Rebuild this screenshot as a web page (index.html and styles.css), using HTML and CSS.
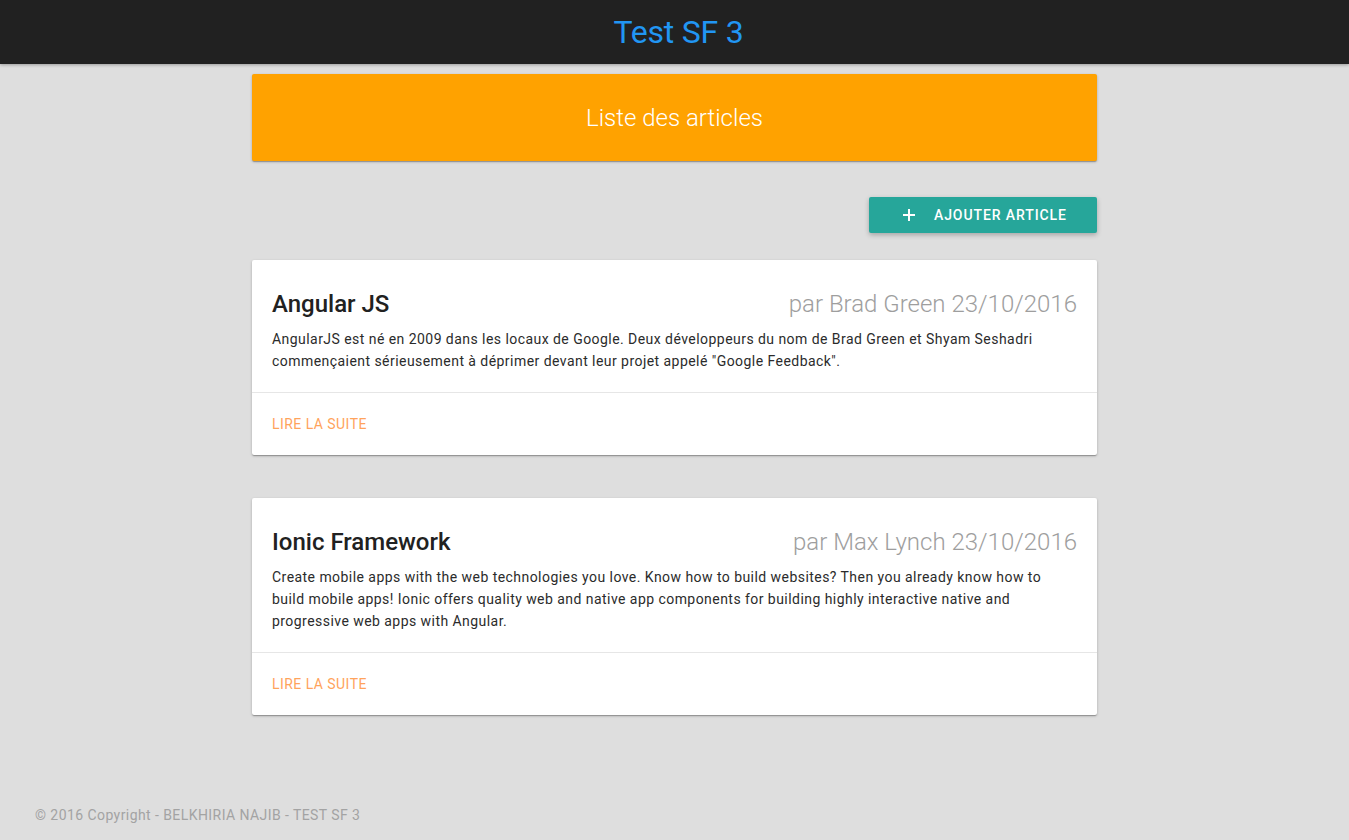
FILE: index.html
```html
<!DOCTYPE html>
<html lang="fr">
<head>
<meta charset="utf-8">
<title>Test SF 3</title>
<link rel="stylesheet" href="styles.css">
</head>
<body>
<header class="topbar">
  <h1 class="topbar-title">Test SF 3</h1>
</header>
<main class="content">
  <div class="banner">Liste des articles</div>
  <div class="actions-row">
    <button class="btn-add" type="button">
      <svg class="btn-icon" width="14" height="14" viewBox="0 0 14 14" aria-hidden="true"><path d="M7 1v12M1 7h12" stroke="#fff" stroke-width="2" fill="none"/></svg>
      <span>Ajouter article</span>
    </button>
  </div>
  <article class="card">
    <div class="card-body">
      <div class="card-head">
        <h2 class="card-title">Angular JS</h2>
        <span class="card-meta">par Brad Green 23/10/2016</span>
      </div>
      <p class="card-text">AngularJS est né en 2009 dans les locaux de Google. Deux développeurs du nom de Brad Green et Shyam Seshadri commençaient sérieusement à déprimer devant leur projet appelé "Google Feedback".</p>
    </div>
    <div class="card-actions"><a class="card-link" href="#">Lire la suite</a></div>
  </article>
  <article class="card">
    <div class="card-body">
      <div class="card-head">
        <h2 class="card-title">Ionic Framework</h2>
        <span class="card-meta">par Max Lynch 23/10/2016</span>
      </div>
      <p class="card-text">Create mobile apps with the web technologies you love. Know how to build websites? Then you already know how to build mobile apps! Ionic offers quality web and native app components for building highly interactive native and progressive web apps with Angular.</p>
    </div>
    <div class="card-actions"><a class="card-link" href="#">Lire la suite</a></div>
  </article>
</main>
<footer class="footer">© 2016 Copyright - BELKHIRIA NAJIB - TEST SF 3</footer>
</body>
</html>
```
FILE: styles.css
```css
* { box-sizing: border-box; }
html, body { margin: 0; padding: 0; }
body {
  background: #dedede;
  font-family: Roboto, "Liberation Sans", Arial, sans-serif;
  color: #212121;
  min-height: 840px;
}
.topbar {
  height: 64px;
  background: #212121;
  display: flex;
  align-items: center;
  justify-content: center;
  padding-left: 8px;
  box-shadow: 0 1px 3px rgba(0,0,0,0.3);
}
.topbar-title {
  margin: 0;
  font-size: 32px;
  font-weight: 400;
  letter-spacing: -0.2px;
  color: #2196f3;
  line-height: 40px;
}
.content {
  width: 845px;
  margin: 10px auto 0;
}
.banner {
  height: 87px;
  background: #ffa200;
  color: #fff;
  font-size: 24px;
  font-weight: 300;
  display: flex;
  align-items: center;
  justify-content: center;
  border-radius: 2px;
  box-shadow: 0 1px 3px rgba(0,0,0,0.2), 0 1px 1px rgba(0,0,0,0.14), 0 2px 1px -1px rgba(0,0,0,0.12);
}
.actions-row {
  display: flex;
  justify-content: flex-end;
  margin-top: 36px;
}
.btn-add {
  width: 228px;
  height: 36px;
  border: none;
  border-radius: 2px;
  background: #26a69a;
  color: #fff;
  font-family: inherit;
  font-size: 14px;
  font-weight: 500;
  letter-spacing: 0.9px;
  text-transform: uppercase;
  display: flex;
  align-items: center;
  gap: 18px;
  padding: 0 0 0 33px;
  box-shadow: 0 2px 5px rgba(0,0,0,0.26);
}
.btn-icon { display: block; }
.card {
  background: #fff;
  border-radius: 2px;
  margin-top: 27px;
  box-shadow: 0 1px 3px rgba(0,0,0,0.2), 0 1px 1px rgba(0,0,0,0.14), 0 2px 1px -1px rgba(0,0,0,0.12);
}
.card + .card { margin-top: 43px; }
.card-body {
  padding: 28px 20px 20px;
}
.card-head {
  display: flex;
  justify-content: space-between;
  align-items: center;
  height: 32px;
}
.card-title {
  margin: 0;
  font-size: 24px;
  font-weight: 500;
  line-height: 32px;
  color: #212121;
}
.card-meta {
  font-size: 24px;
  font-weight: 300;
  color: #9e9e9e;
  line-height: 32px;
}
.card-text {
  margin: 8px 0 0;
  font-size: 14px;
  line-height: 22px;
  letter-spacing: 0.45px;
  color: #2b2b2b;
}
.card-actions {
  border-top: 1px solid #e6e6e6;
  height: 63px;
  display: flex;
  align-items: center;
  padding: 0 20px;
}
.card-link {
  color: #ffa35c;
  text-decoration: none;
  text-transform: uppercase;
  font-size: 14px;
  letter-spacing: 0.45px;
}
.footer {
  position: absolute;
  left: 35px;
  top: 805px;
  font-size: 14px;
  line-height: 20px;
  letter-spacing: 0.43px;
  color: #a3a3a3;
}
```
